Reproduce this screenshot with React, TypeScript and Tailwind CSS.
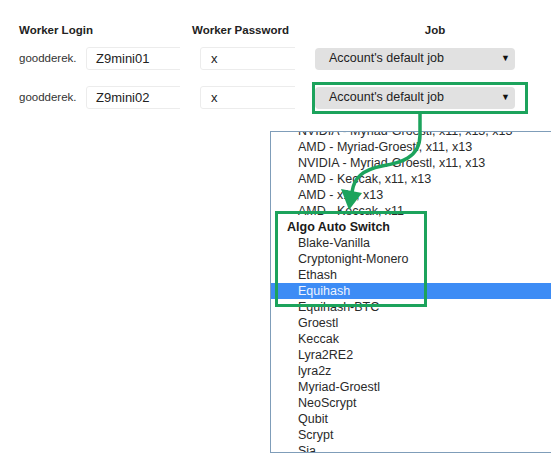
import React from "react";

const items: { label: string; group?: boolean; active?: boolean }[] = [
  { label: "NVIDIA - Myriad-Groestl, x11, x13, x13" },
  { label: "AMD - Myriad-Groestl, x11, x13" },
  { label: "NVIDIA - Myriad-Groestl, x11, x13" },
  { label: "AMD - Keccak, x11, x13" },
  { label: "AMD - x11, x13" },
  { label: "AMD - Keccak, x11" },
  { label: "Algo Auto Switch", group: true },
  { label: "Blake-Vanilla" },
  { label: "Cryptonight-Monero" },
  { label: "Ethash" },
  { label: "Equihash", active: true },
  { label: "Equihash-BTC" },
  { label: "Groestl" },
  { label: "Keccak" },
  { label: "Lyra2RE2" },
  { label: "lyra2z" },
  { label: "Myriad-Groestl" },
  { label: "NeoScrypt" },
  { label: "Qubit" },
  { label: "Scrypt" },
  { label: "Sia" },
];

function Row({ name }: { name: string }) {
  return (
    <div className="flex items-center h-[23px]">
      <span className="w-[67px] text-[11.5px] text-[#333]">goodderek.</span>
      <div className="w-[94px] overflow-hidden">
        <div className="w-[120px] h-[23px] border border-[#ececec] rounded-[3px] flex items-center pl-[9px] text-[13px] text-[#222]">
          {name}
        </div>
      </div>
      <div className="w-[95px] ml-[20px] overflow-hidden">
        <div className="w-[120px] h-[23px] border border-[#ececec] rounded-[3px] flex items-center pl-[10px] text-[13px] text-[#222]">
          x
        </div>
      </div>
      <div className="ml-[20px] w-[200px] h-[22px] bg-[#e1e1e1] rounded-[4px] flex items-center justify-between pl-[14px] pr-[5px] text-[12.5px] text-[#222]">
        <span>Account's default job</span>
        <span className="text-[9px] text-[#111]">▼</span>
      </div>
    </div>
  );
}

export default function App() {
  return (
    <div
      className="relative w-[551px] h-[472px] bg-white overflow-hidden"
      style={{ fontFamily: '"Liberation Sans", Arial, sans-serif' }}
    >
      <div className="pl-[19px] pt-[24px] flex flex-col">
        <div className="flex items-center h-[14px] text-[11.5px] font-bold text-[#222]">
          <span className="w-[173px]">Worker Login</span>
          <span className="w-[123px]">Worker Password</span>
          <span className="ml-[20px] w-[200px] text-center">Job</span>
        </div>
        <div className="mt-[9px] flex flex-col gap-[16px]">
          <Row name="Z9mini01" />
          <Row name="Z9mini02" />
        </div>
      </div>

      <div className="absolute left-[270px] top-[131px] w-[290px] h-[322px] border border-[#7f9db9] bg-white overflow-hidden">
        <div className="-mt-[9px] flex flex-col text-[12.5px] text-[#2a2a2a]">
          {items.map((it) => (
            <div
              key={it.label}
              className={
                it.group
                  ? "h-[16px] leading-[16px] pl-[16px] font-bold text-[#1a1a1a]"
                  : it.active
                  ? "h-[16px] leading-[16px] pl-[27px] bg-[#3d8cf5] text-[#eef4ff]"
                  : "h-[16px] leading-[16px] pl-[27px]"
              }
            >
              {it.label}
            </div>
          ))}
        </div>
      </div>

      <div className="absolute left-[312px] top-[82px] w-[216px] h-[32px] border-[3px] border-[#1ca35c]" />
      <div className="absolute left-[275px] top-[211px] w-[152px] h-[96px] border-[3px] border-[#1ca35c]" />

      <svg className="absolute left-0 top-0 pointer-events-none" width="551" height="472">
        <path
          d="M420 113 L420 135 C420 158 400 163 382 166 C362 170 354 178 352 192"
          fill="none"
          stroke="#1ca35c"
          strokeWidth="3.5"
        />
        <polygon points="341,189 362,193 349,210" fill="#1ca35c" />
      </svg>
    </div>
  );
}
